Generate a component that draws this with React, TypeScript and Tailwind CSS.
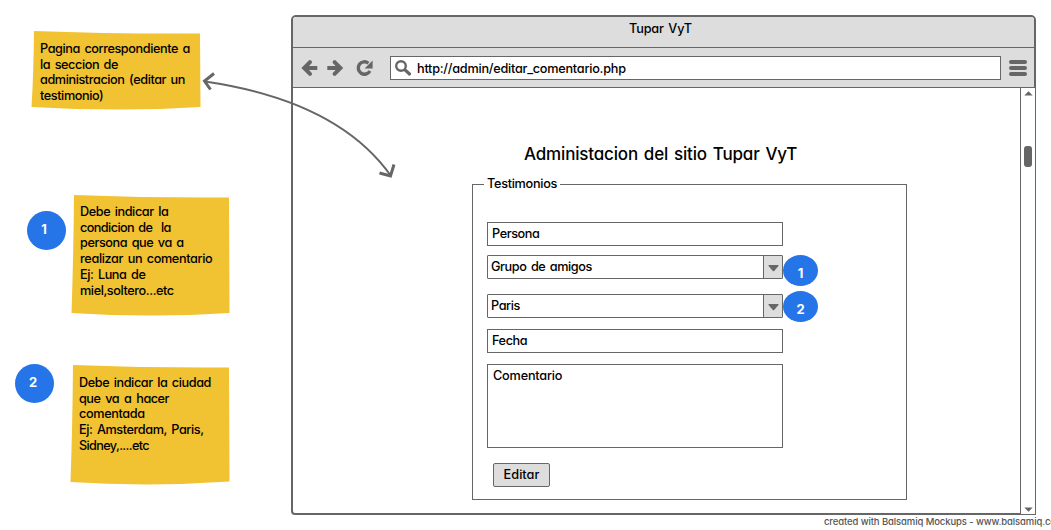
import type { ReactNode } from "react";

function Note({ className, shape, box, children }: { className: string; shape: string; box: string; children: ReactNode }) {
  return (
    <div className={`absolute ${className}`}>
      <svg className="absolute inset-0 h-full w-full" viewBox={box} preserveAspectRatio="none">
        <path d={shape} fill="#f1c232" />
      </svg>
      <div className="relative flex flex-col leading-[15.7px] whitespace-pre">{children}</div>
    </div>
  );
}

function Badge({ className, children }: { className: string; children: ReactNode }) {
  return (
    <div className={`absolute flex justify-center rounded-[50%] bg-[#2575e8] text-[13px] leading-4 font-bold tracking-normal text-white ${className}`}>
      {children}
    </div>
  );
}

function Field({ className = "", children }: { className?: string; children: ReactNode }) {
  return <div className={`flex h-6 w-[296px] border border-[#666] bg-white pl-1 leading-[21px] ${className}`}>{children}</div>;
}

function Select({ className = "", children }: { className?: string; children: ReactNode }) {
  return (
    <div className={`flex h-6 w-[296px] justify-between rounded-[1px] border border-[#666] bg-white pl-[3px] leading-[21px] ${className}`}>
      {children}
      <div className="flex w-[19px] justify-center border-l border-[#666] bg-[#ddd] pt-[9px]">
        <svg width="11" height="7" viewBox="0 0 11 7">
          <path d="M1 0H10Q11 0 10.4 1L6.2 6Q5.5 6.6 4.8 6L.6 1Q0 0 1 0Z" fill="#666" />
        </svg>
      </div>
    </div>
  );
}

export default function App() {
  return (
    <main className="relative h-[530px] w-[1051px] overflow-hidden bg-white font-['Inter','Liberation_Sans',sans-serif] text-[12.7px] font-[450] tracking-[-0.42px] text-black [font-feature-settings:'cv11'] [word-spacing:1.5px]">
      <Note
        className="top-[31px] left-[31px] h-[79px] w-[170px] pt-[10px] pl-[9px]"
        box="0 0 170 79"
        shape="M3 0Q80 3 169 2.5L169.5 76Q90 81 .5 76Q2.5 45 3 0Z"
      >
        <span>Pagina correspondiente a</span>
        <span>la seccion de</span>
        <span>administracion (editar un</span>
        <span>testimonio)</span>
      </Note>
      <Note
        className="top-[195px] left-[71px] h-[121px] w-[159px] pt-[9px] pl-[9px]"
        box="0 0 159 121"
        shape="M3 0Q80 3 158 2.5L158.5 118Q80 123 .5 118Q2.5 60 3 0Z"
      >
        <span>Debe indicar la</span>
        <span className="tracking-[-0.6px]">condicion de  la</span>
        <span>persona que va a</span>
        <span className="tracking-[-0.36px]">realizar un comentario</span>
        <span>Ej: Luna de</span>
        <span>miel,soltero...etc</span>
      </Note>
      <Note
        className="top-[365px] left-[70px] h-[120px] w-[160px] pt-[10px] pl-[9px]"
        box="0 0 160 120"
        shape="M3 0Q80 3 159 2.5L159.5 116.5Q80 122 .5 117Q2.5 60 3 0Z"
      >
        <span>Debe indicar la ciudad</span>
        <span className="tracking-[-0.6px] [word-spacing:2px]">
          <span className="tracking-[-0.5px]">que va a hacer</span>
        </span>
        <span className="tracking-[-0.36px]">comentada</span>
        <span>Ej: Amsterdam, Paris,</span>
        <span className="tracking-[-0.65px]">Sidney,....etc</span>
      </Note>
      <Badge className="top-[211px] left-[27px] h-[39px] w-[39px] pt-[10px] pr-[5px]">1</Badge>
      <Badge className="top-[364px] left-[15px] h-[39px] w-[39px] pt-[10px] pr-[3px]">2</Badge>

      <section className="absolute top-[15px] left-[291px] flex h-[500px] w-[745px] flex-col rounded-[5px_5px_1px_4px] border-2 border-[#666] bg-white">
        <header className="flex h-[31px] shrink-0 justify-center rounded-t-[3px] border-b border-[#666] bg-[#ddd] leading-[23px]">
          <span className="mr-[6px] tracking-[-0.2px]">Tupar VyT</span>
        </header>
        <nav className="flex h-10 shrink-0 items-start border-b border-[#666] bg-[#ddd] pt-2">
          <svg className="mt-[3px] ml-[8px]" width="17" height="18" viewBox="0 0 17 18" fill="none" stroke="#666" strokeWidth="4">
            <path d="M16.3 9H4" />
            <path d="M9 3.2L3.2 9L9 14.8" strokeLinecap="round" />
          </svg>
          <svg className="mt-[3px] ml-[9px]" width="17" height="18" viewBox="0 0 17 18" fill="none" stroke="#666" strokeWidth="4">
            <path d="M.3 9H12.5" />
            <path d="M7.6 3.2L13.4 9L7.6 14.8" strokeLinecap="round" />
          </svg>
          <svg className="mt-[3px] mr-px ml-[12px]" width="17" height="18" viewBox="0 0 17 18">
            <path d="M13.9 12A6.2 6.2 0 1 1 12.4 4.2" fill="none" stroke="#666" strokeWidth="3.4" />
            <path d="M16.6 1.5V9.5H8.6Z" fill="#666" />
          </svg>
          <div className="ml-[16px] flex h-6 w-[611px] border border-[#666] bg-white leading-[23px]">
            <svg className="mt-[3px] ml-[3px]" width="18" height="17" viewBox="0 0 18 17" fill="none" stroke="#666">
              <circle cx="7" cy="6" r="4.8" strokeWidth="2.4" />
              <path d="M11 9.8L15.5 14" strokeWidth="3.2" strokeLinecap="round" />
            </svg>
            <span className="ml-[5px] tracking-[-0.25px]">http://admin/editar_comentario.php</span>
          </div>
          <div className="mt-[4px] ml-[8px] flex w-[18px] flex-col gap-[2px]">
            <i className="h-1 rounded-full bg-[#666]" />
            <i className="h-1 rounded-full bg-[#666]" />
            <i className="h-1 rounded-full bg-[#666]" />
          </div>
        </nav>
        <div className="flex min-h-0 flex-1">
          <div className="flex-1">
            <h1 className="mt-[54px] ml-[231px] text-[17px] leading-6 tracking-[-0.17px] whitespace-nowrap">Administacion del sitio Tupar VyT</h1>
            <div className="mt-[18px] ml-[179px] h-[316px] w-[435px] border border-[#666] pl-[14px]">
              <div className="-mt-[12px] -ml-[3px] h-[22px] w-[76px] bg-white pl-[3px] leading-[22px] tracking-[-0.3px]">Testimonios</div>
              <Field className="mt-[27px]">Persona</Field>
              <Select className="mt-[9px]">Grupo de amigos</Select>
              <Select className="mt-[15px]">Paris</Select>
              <Field className="mt-[11px]">Fecha</Field>
              <div className="mt-[11px] h-[84px] w-[296px] border border-[#666] pl-[5px] leading-[21px] tracking-[-0.2px]">Comentario</div>
              <div className="mt-[15px] ml-[6px] flex h-6 w-[57px] justify-center rounded-[2px] border border-[#666] bg-[#ddd] leading-[21px] tracking-[0.05px]">Editar</div>
            </div>
          </div>
          <div className="-mt-px -mr-[2px] -mb-[2px] flex w-4 flex-col items-center border border-[#666] bg-white">
            <svg className="mt-[3px]" width="9" height="5" viewBox="0 0 9 5">
              <path d="M.3 4.5L4.5 .3L8.7 4.5Z" fill="#666" />
            </svg>
            <i className="mt-[50px] h-[21px] w-2 rounded-[3px] bg-[#666]" />
            <svg className="mt-auto mb-[2px]" width="9" height="5" viewBox="0 0 9 5">
              <path d="M.3 .5L4.5 4.7L8.7 .5Z" fill="#666" />
            </svg>
          </div>
        </div>
      </section>

      <Badge className="top-[255px] left-[783px] h-[31px] w-[35px] pt-[10px]">1</Badge>
      <Badge className="top-[291px] left-[783px] h-[31px] w-[35px] pt-[10px]">2</Badge>

      <svg className="absolute top-[60px] left-[195px]" width="210" height="130" viewBox="195 60 210 130" fill="none" stroke="#666">
        <path d="M205 81.5Q338 101 391 176" strokeWidth="2" />
        <path d="M214 73.5L204.5 81L210.5 89.5M379.5 173L390.5 176L394 164.5" strokeWidth="3" />
      </svg>

      <footer className="absolute top-[516px] left-[824px] text-[9.5px] leading-3 font-medium tracking-[-0.11px] whitespace-nowrap text-[#555] [word-spacing:0px]">created with Balsamiq Mockups - www.balsamiq.com</footer>
    </main>
  );
}
